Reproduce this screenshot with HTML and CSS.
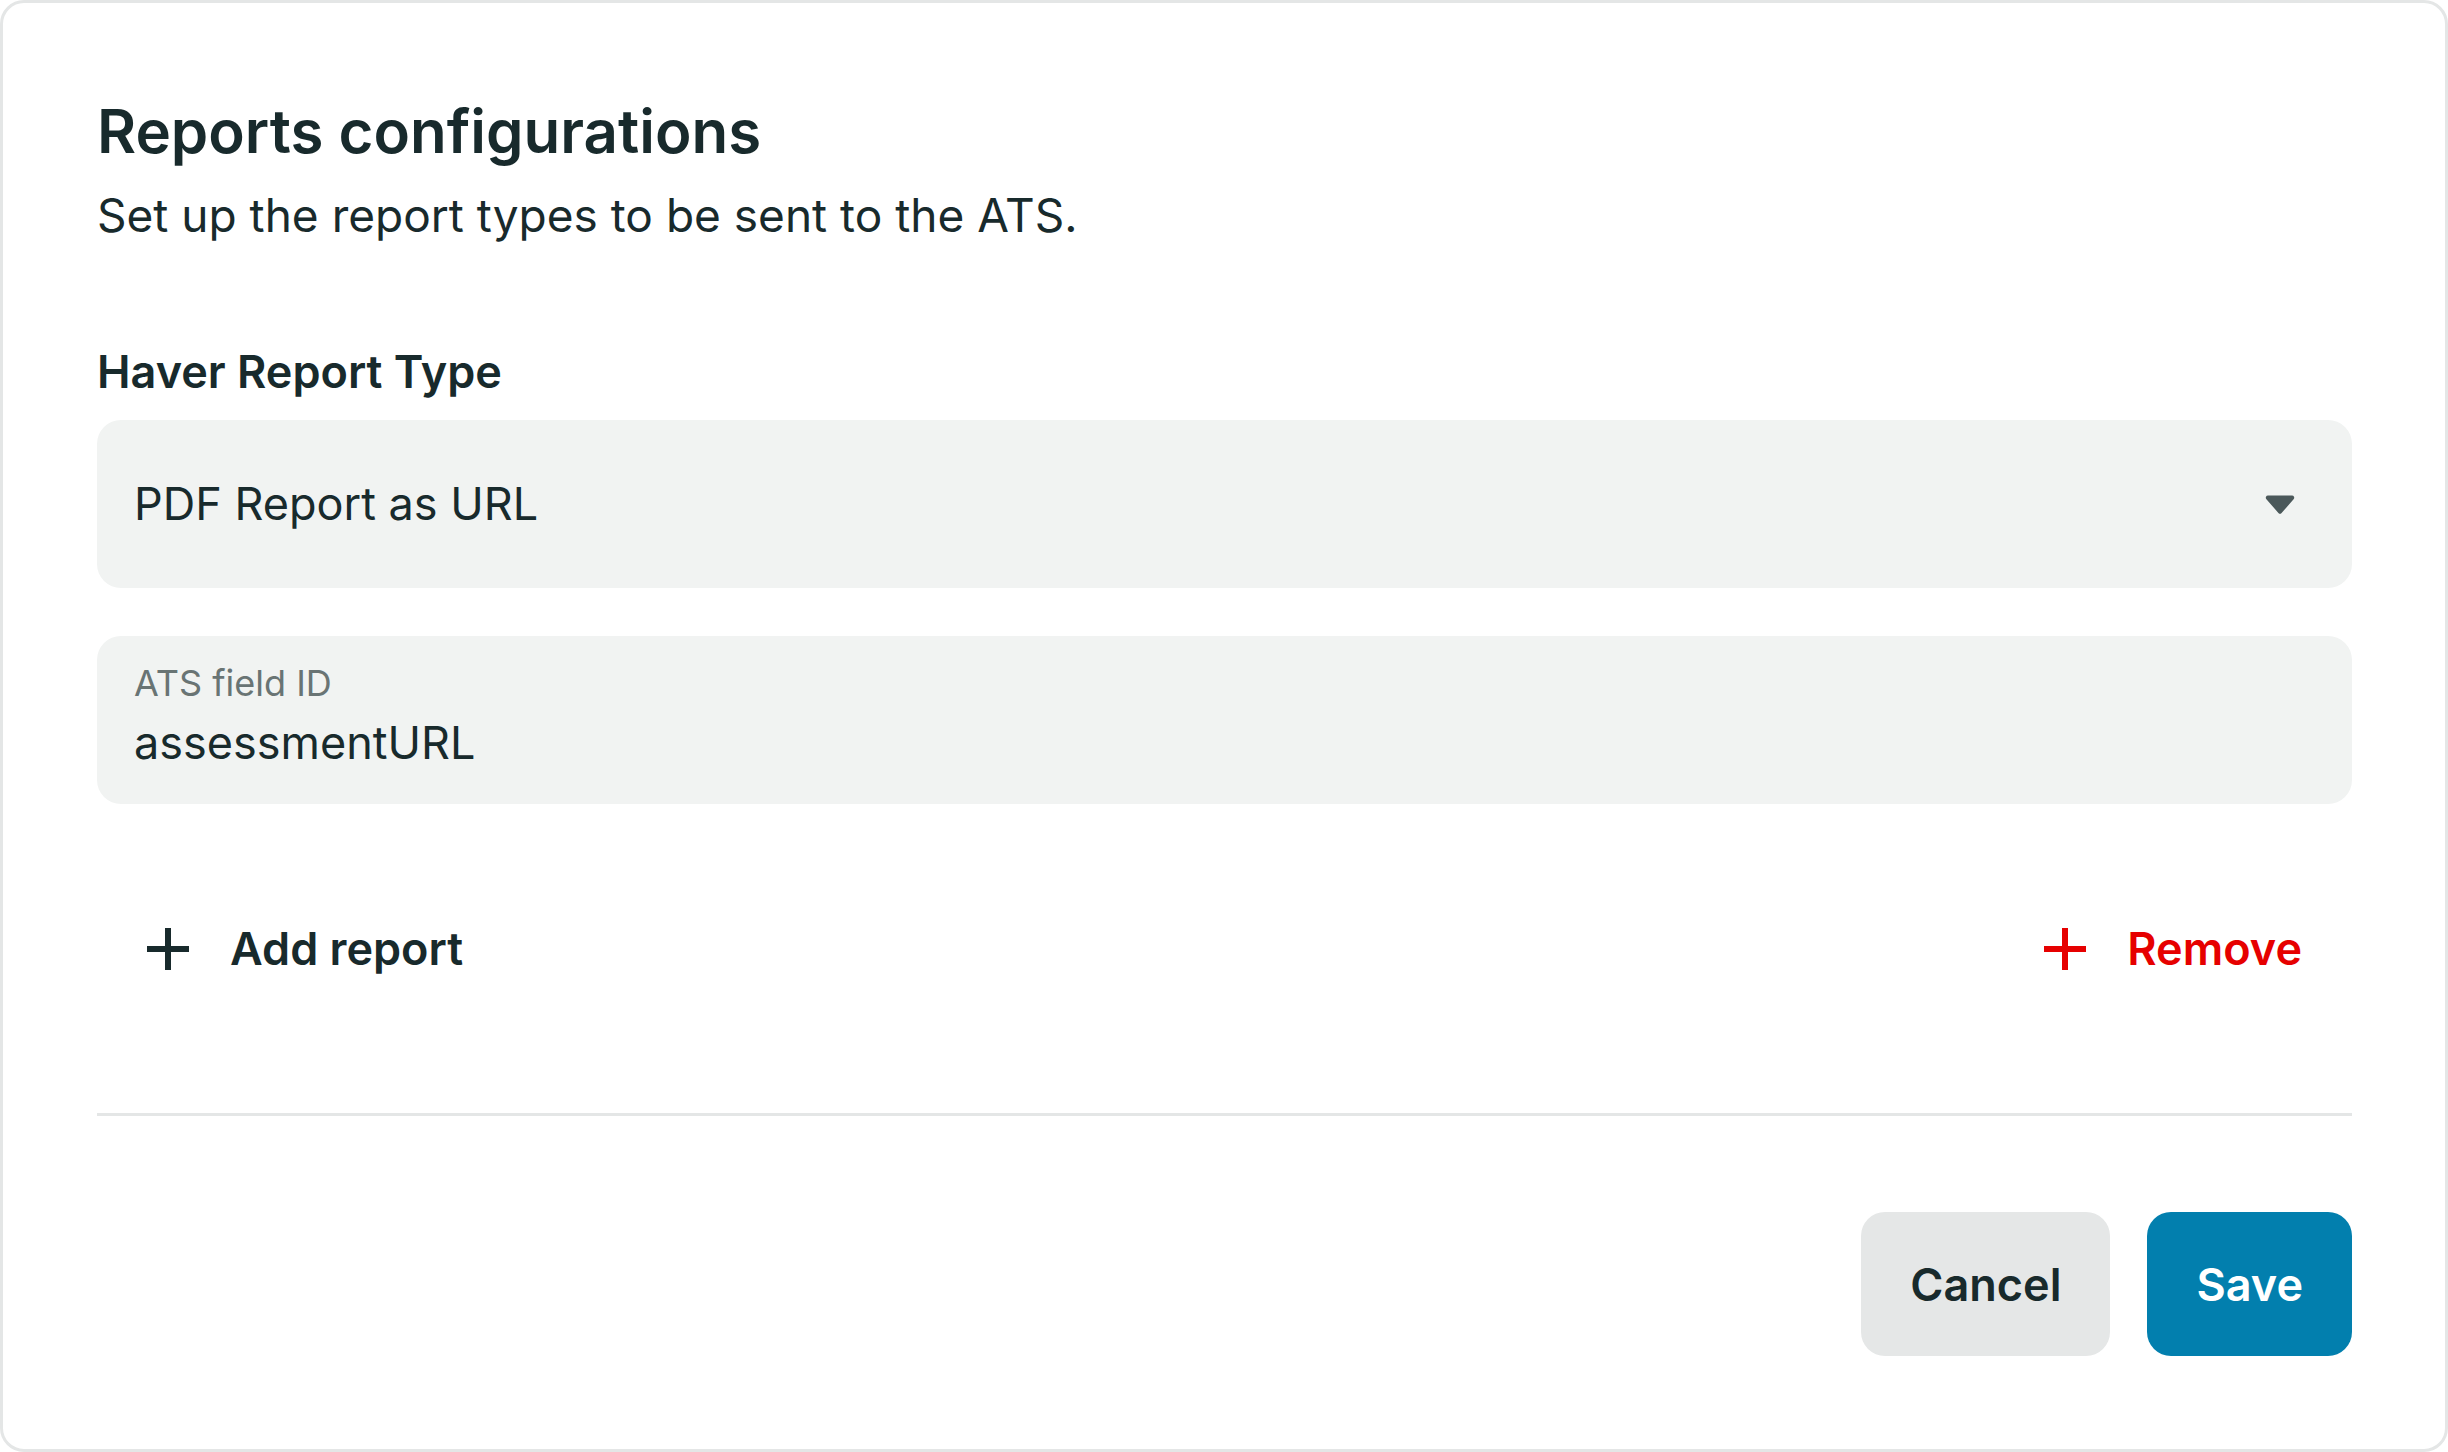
FILE: index.html
```html
<!DOCTYPE html>
<html lang="en">
  <head>
    <meta charset="utf-8">
    <title>Reports configurations</title>
    <link rel="stylesheet" href="styles.css">
  </head>
  <body>
    <div class="dialog">
      <h1 class="title">Reports configurations</h1>
      <p class="subtitle">Set up the report types to be sent to the ATS.</p>

      <h2 class="section">Haver Report Type</h2>

      <div class="select">
        <span class="select-value">PDF Report as URL</span>
        <svg class="caret" width="30" height="21" viewBox="0 0 30 21">
          <path d="M3 1.5 H27 A2.2 2.2 0 0 1 28.6 5.2 L16.6 19 A2.2 2.2 0 0 1 13.4 19 L1.4 5.2 A2.2 2.2 0 0 1 3 1.5 Z" fill="#4b585a"/>
        </svg>
      </div>

      <div class="field">
        <div class="field-label">ATS field ID</div>
        <div class="field-value">assessmentURL</div>
      </div>

      <div class="actions">
        <a class="action add">
          <svg width="42" height="42" viewBox="0 0 42 42">
            <path d="M21 0 V42 M0 21 H42" stroke="#182a2c" stroke-width="6"/>
          </svg>
          <span>Add report</span>
        </a>
        <a class="action remove">
          <svg width="42" height="42" viewBox="0 0 42 42">
            <path d="M21 0 V42 M0 21 H42" stroke="#e60000" stroke-width="6"/>
          </svg>
          <span>Remove</span>
        </a>
      </div>

      <hr class="divider">

      <div class="footer">
        <button class="btn btn-cancel">Cancel</button>
        <button class="btn btn-save">Save</button>
      </div>
    </div>
  </body>
</html>
```

FILE: styles.css
```css
html, body {
    margin: 0;
    padding: 0;
    background: #ffffff;
}

body {
    font-family: Inter, "Noto Sans", sans-serif;
    color: #182a2c;
}

.dialog {
    box-sizing: border-box;
    width: 2448px;
    height: 1452px;
    border: 3px solid #e4e6e6;
    border-radius: 24px;
    padding: 94px 93px 0 94px;
    display: flex;
    flex-direction: column;
}

.title {
    margin: 0;
    font-size: 60px;
    line-height: 68px;
    font-weight: 600;
}

.subtitle {
    margin: 26px 0 0 0;
    font-size: 46px;
    line-height: 48px;
    font-weight: 400;
}

.section {
    margin: 111px 0 0 0;
    font-size: 45px;
    line-height: 44px;
    font-weight: 600;
}

.select {
    margin-top: 26px;
    height: 168px;
    box-sizing: border-box;
    background: #f1f3f2;
    border-radius: 24px;
    padding: 0 57px 0 37px;
    display: flex;
    align-items: center;
    justify-content: space-between;
}

.select-value {
    font-size: 45px;
    line-height: 50px;
}

.field {
    margin-top: 48px;
    height: 168px;
    box-sizing: border-box;
    background: #f1f3f2;
    border-radius: 24px;
    padding: 27px 37px 0 37px;
}

.field-label {
    font-size: 36px;
    line-height: 40px;
    color: #697474;
}

.field-value {
    margin-top: 15px;
    font-size: 45px;
    line-height: 50px;
}

.actions {
    margin-top: 124px;
    display: flex;
    justify-content: space-between;
    align-items: center;
    padding: 0 50px;
}

.action {
    display: flex;
    align-items: center;
    gap: 41px;
    font-size: 45px;
    line-height: 42px;
    font-weight: 600;
    cursor: pointer;
}

.action svg {
    display: block;
}

.remove {
    color: #e60000;
}

.divider {
    margin: 143px 0 0 0;
    border: 0;
    height: 3px;
    background: #e4e6e6;
}

.footer {
    margin-top: 96px;
    display: flex;
    justify-content: flex-end;
    gap: 37px;
}

.btn {
    height: 144px;
    border: 0;
    border-radius: 24px;
    padding: 0 49px;
    font-family: Inter, "Noto Sans", sans-serif;
    font-size: 45px;
    font-weight: 600;
}

.btn-cancel {
    background: #e5e7e7;
    color: #182a2c;
}

.btn-save {
    background: #027fae;
    color: #ffffff;
}
```
